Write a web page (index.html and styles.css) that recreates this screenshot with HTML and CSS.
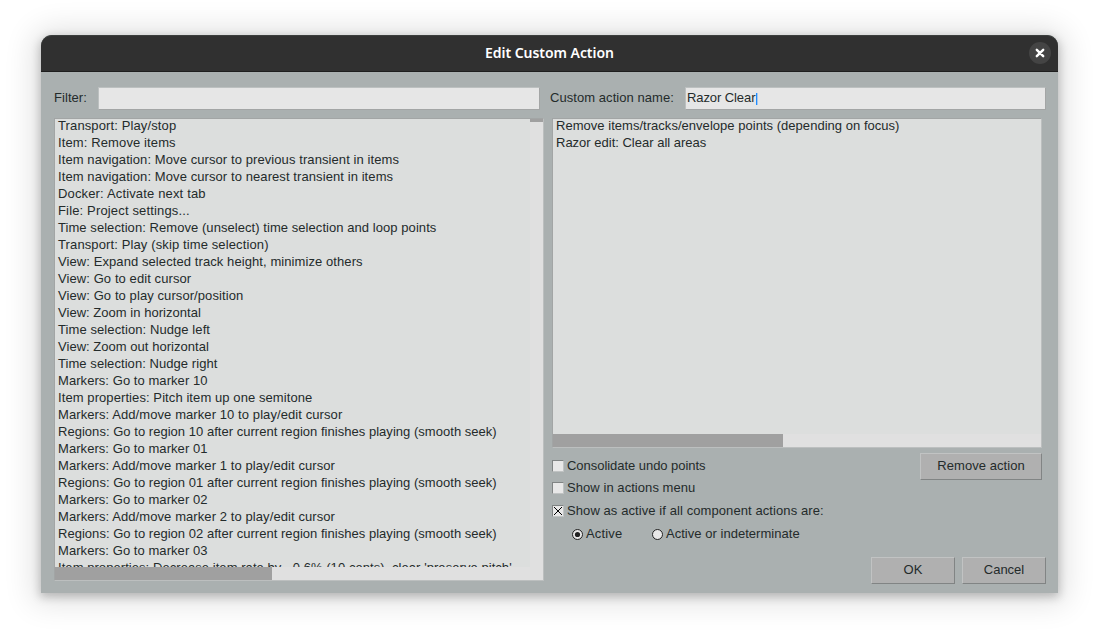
FILE: index.html
```html
<!DOCTYPE html>
<html lang="en">
<head>
<meta charset="utf-8">
<title>Edit Custom Action</title>
<link rel="stylesheet" href="styles.css">
</head>
<body>
<div class="window">
  <header class="titlebar">
    <h1 class="title">Edit Custom Action</h1>
    <button class="close" aria-label="Close"><svg width="22" height="22" viewBox="0 0 22 22"><path d="M7.8 7.8l6.4 6.4M14.2 7.8l-6.4 6.4" stroke="#fff" stroke-width="2.4" stroke-linecap="round"/></svg></button>
  </header>
  <main class="content">
    <section class="left">
      <div class="field"><span class="label-filter s2">Filter:</span><div class="input"></div></div>
      <div class="list list-actions">
        <div class="rows">
          <div class="s4">Transport: Play/stop</div>
          <div class="s4">Item: Remove items</div>
          <div class="s3">Item navigation: Move cursor to previous transient in items</div>
          <div class="s3">Item navigation: Move cursor to nearest transient in items</div>
          <div class="s5">Docker: Activate next tab</div>
          <div class="s5">File: Project settings...</div>
          <div class="s2">Time selection: Remove (unselect) time selection and loop points</div>
          <div class="s4">Transport: Play (skip time selection)</div>
          <div class="s3">View: Expand selected track height, minimize others</div>
          <div class="s3">View: Go to edit cursor</div>
          <div class="s3">View: Go to play cursor/position</div>
          <div class="s1">View: Zoom in horizontal</div>
          <div class="s3">Time selection: Nudge left</div>
          <div class="s1">View: Zoom out horizontal</div>
          <div class="s2">Time selection: Nudge right</div>
          <div class="s2">Markers: Go to marker 10</div>
          <div class="s3">Item properties: Pitch item up one semitone</div>
          <div class="s3">Markers: Add/move marker 10 to play/edit cursor</div>
          <div class="s1">Regions: Go to region 10 after current region finishes playing (smooth seek)</div>
          <div class="s2">Markers: Go to marker 01</div>
          <div class="s3">Markers: Add/move marker 1 to play/edit cursor</div>
          <div class="s1">Regions: Go to region 01 after current region finishes playing (smooth seek)</div>
          <div class="s2">Markers: Go to marker 02</div>
          <div class="s3">Markers: Add/move marker 2 to play/edit cursor</div>
          <div class="s1">Regions: Go to region 02 after current region finishes playing (smooth seek)</div>
          <div class="s2">Markers: Go to marker 03</div>
          <div class="s2">Item properties: Decrease item rate by ~0.6% (10 cents), clear 'preserve pitch'</div>
        </div>
        <div class="vscroll"><div class="vthumb"></div></div>
        <div class="hscroll"><div class="hthumb"></div></div>
      </div>
    </section>
    <section class="right">
      <div class="field"><span class="label-name s2">Custom action name:</span><div class="input"><span class="value">Razor Clear</span><span class="caret"></span></div></div>
      <div class="list list-custom">
        <div class="rows">
          <div class="s1">Remove items/tracks/envelope points (depending on focus)</div>
          <div>Razor edit: Clear all areas</div>
        </div>
        <div class="hscroll"><div class="hthumb"></div></div>
      </div>
      <div class="options">
        <div class="checks">
          <div class="check n1"><span class="box"></span>Consolidate undo points</div>
          <div class="check s2"><span class="box"></span>Show in actions menu</div>
          <div class="check check-active s3"><span class="box"><svg width="10" height="10" viewBox="0 0 10 10" shape-rendering="crispEdges"><path d="M1 1l8 8M9 1l-8 8" stroke="#000"/></svg></span>Show as active if all component actions are:</div>
          <div class="radios">
            <div class="radio s5"><svg width="11" height="11" viewBox="0 0 11 11"><circle cx="5.5" cy="5.5" r="5" fill="#e8e8e8" stroke="#222"/><circle cx="5.5" cy="5.5" r="2.6" fill="#222"/></svg>Active</div>
            <div class="radio"><svg width="11" height="11" viewBox="0 0 11 11"><circle cx="5.5" cy="5.5" r="5" fill="#e8e8e8" stroke="#222"/></svg><span class="s1">Active or indeterminate</span></div>
          </div>
        </div>
        <button class="btn btn-remove">Remove action</button>
      </div>
      <footer class="footer"><button class="btn">OK</button><button class="btn">Cancel</button></footer>
    </section>
  </main>
</div>
</body>
</html>
```
FILE: styles.css
```css
* { box-sizing: border-box; }
body {
  margin: 0;
  padding: 35px 41px 47px;
  height: 640px;
  overflow: hidden;
  background: #fff;
  font: 13px/17px "Liberation Sans", Arial, sans-serif;
  color: #242b2b;
}
.window {
  height: 558px;
  display: flex;
  flex-direction: column;
  background: #aab0b0;
  border-radius: 11px 11px 0 0;
  box-shadow: 0 3px 10px 1px rgba(0,0,0,.22), 0 2px 30px 8px rgba(0,0,0,.12);
}
.titlebar {
  height: 37px;
  flex: none;
  display: grid;
  grid-template-columns: 29px 1fr 29px;
  align-items: center;
  padding-bottom: 2px;
  background: #303030;
  border-top: 1px solid #3b3e3d;
  border-bottom: 1px solid #1e1e1e;
  border-radius: 11px 11px 0 0;
}
.title {
  grid-column: 2;
  margin: 0;
  text-align: center;
  color: #fff;
  font: 600 14px/20px "Noto Sans", sans-serif;
  letter-spacing: -.05px;
}
.close {
  width: 22px;
  height: 22px;
  padding: 0;
  border: 0;
  border-radius: 50%;
  background: #444;
}
.close svg { display: block; }
.content { flex: 1; display: flex; padding: 15px 12px 0 13px; }
.left { width: 490px; }
.right { width: 496px; margin-left: 6px; }
.field { display: flex; height: 23px; line-height: 21px; }
.label-filter { width: 44px; }
.label-name { width: 135px; }
.input {
  width: 442px;
  display: flex;
  padding-left: 1px;
  line-height: 19px;
  background: #e6e6e6;
  border: 1px solid;
  border-color: #bcc0c0 #a3a5a5 #a3a5a5 #bcc0c0;
}
.right .input { width: 361px; }
.value { width: 69px; letter-spacing: -.09px; white-space: nowrap; }
.caret { flex: none; width: 1px; height: 12px; margin-top: 5px; background: #208cff; box-shadow: 1px 0 rgba(32,140,255,.35); }
.list {
  width: 490px;
  margin-top: 8px;
  display: grid;
  grid-template-columns: 1fr auto;
  grid-template-rows: 1fr 13px;
  background: #dcdedd;
  border: 1px solid;
  border-color: #a2a5a5 #bcbfbf #bcbfbf #a2a5a5;
}
.list-actions { height: 463px; }
.list-custom { height: 330px; margin-left: 2px; }
.rows { min-height: 0; overflow: hidden; padding-left: 3px; white-space: nowrap; }
.rows > div { height: 17px; line-height: 13px; }

/* per-label tracking */
.n1 { letter-spacing: -.04px; }
.s1 { letter-spacing: .03px; }
.s2 { letter-spacing: .06px; }
.s3 { letter-spacing: .085px; }
.s4 { letter-spacing: .12px; }
.s5 { letter-spacing: .155px; }

.vscroll { width: 13px; background: #e0e0e0; }
.vthumb { height: 3px; background: #a0a0a0; }
.hscroll { grid-column: 1 / -1; background: #e0e0e0; }
.hthumb { width: 217px; height: 13px; background: #a0a0a0; }
.list-custom .hthumb { width: 230px; }
.options { display: flex; justify-content: space-between; padding: 5px 4px 0 2px; height: 109px; }
.checks { padding-top: 4px; }
.check { display: flex; align-items: center; gap: 3px; height: 17px; margin-bottom: 5px; }
.check-active { margin-top: 6px; }
.box {
  width: 12px;
  height: 12px;
  background: #e8e8e8;
  border: 1px solid;
  border-color: #808484 #c0c3c3 #c0c3c3 #808484;
}
.box svg { display: block; }
.radios { display: grid; grid-template-columns: 80px auto; padding: 1px 0 0 20px; }
.radio { display: flex; align-items: center; gap: 3px; height: 17px; }
.radio svg { margin-top: 1px; }
.btn {
  width: 84px;
  height: 27px;
  padding: 0 0 2px;
  font: inherit;
  color: #242b2b;
  background: #b0b0b0;
  border: 1px solid;
  border-color: #c1c3c3 #818484 #818484 #c1c3c3;
}
.btn-remove { width: 122px; letter-spacing: .06px; }
.footer { display: flex; justify-content: flex-end; gap: 7px; }
```
